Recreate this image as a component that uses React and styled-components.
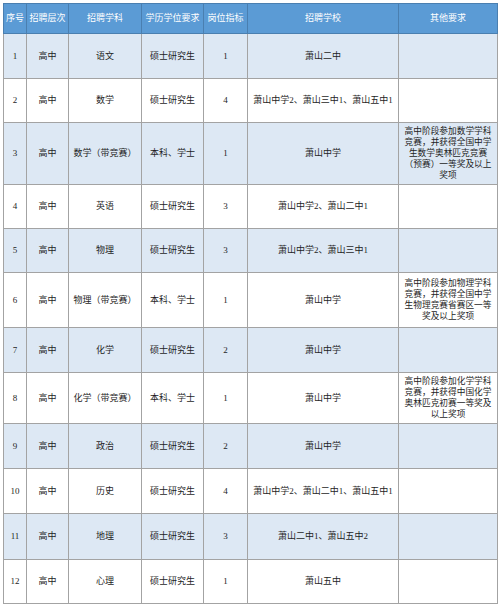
import React from "react";
import styled, { createGlobalStyle } from "styled-components";

const GlobalStyle = createGlobalStyle`
  html, body {
    margin: 0;
    padding: 0;
    background: #ffffff;
  }
  body {
    font-family: "Liberation Serif", "Noto Sans CJK SC", serif;
  }
`;

const columns = [
  { title: "序号", width: 23 },
  { title: "招聘层次", width: 42 },
  { title: "招聘学科", width: 73 },
  { title: "学历学位要求", width: 62 },
  { title: "岗位指标", width: 44 },
  { title: "招聘学校", width: 151 },
  { title: "其他要求", width: 99 },
];

const rows = [
  { h: 45, subject: "语文", degree: "硕士研究生", count: 1, school: "萧山二中", other: "" },
  { h: 44, subject: "数学", degree: "硕士研究生", count: 4, school: "萧山中学2、萧山三中1、萧山五中1", other: "" },
  {
    h: 62,
    subject: "数学（带竞赛）",
    degree: "本科、学士",
    count: 1,
    school: "萧山中学",
    other: "高中阶段参加数学学科竞赛，并获得全国中学生数学奥林匹克竞赛（预赛）一等奖及以上奖项",
  },
  { h: 44, subject: "英语", degree: "硕士研究生", count: 3, school: "萧山中学2、萧山二中1", other: "" },
  { h: 44, subject: "物理", degree: "硕士研究生", count: 3, school: "萧山中学2、萧山三中1", other: "" },
  {
    h: 55,
    subject: "物理（带竞赛）",
    degree: "本科、学士",
    count: 1,
    school: "萧山中学",
    other: "高中阶段参加物理学科竞赛，并获得全国中学生物理竞赛省赛区一等奖及以上奖项",
  },
  { h: 45, subject: "化学", degree: "硕士研究生", count: 2, school: "萧山中学", other: "" },
  {
    h: 51,
    subject: "化学（带竞赛）",
    degree: "本科、学士",
    count: 1,
    school: "萧山中学",
    other: "高中阶段参加化学学科竞赛，并获得中国化学奥林匹克初赛一等奖及以上奖项",
  },
  { h: 45, subject: "政治", degree: "硕士研究生", count: 2, school: "萧山中学", other: "" },
  { h: 45, subject: "历史", degree: "硕士研究生", count: 4, school: "萧山中学2、萧山二中1、萧山五中1", other: "" },
  { h: 46, subject: "地理", degree: "硕士研究生", count: 3, school: "萧山二中1、萧山五中2", other: "" },
  { h: 44, subject: "心理", degree: "硕士研究生", count: 1, school: "萧山五中", other: "" },
];

const Page = styled.div`
  padding: 3px;
`;

const Table = styled.table`
  width: 494px;
  table-layout: fixed;
  border-collapse: collapse;
  font-size: 9px;
  line-height: 11px;
  color: #1e1e1e;
`;

const HeadRow = styled.tr`
  height: 30px;
  background: #5b9bd5;
`;

const HeadCell = styled.th`
  border: 1px solid #4a7fb0;
  color: #ffffff;
  font-weight: normal;
  text-align: center;
  vertical-align: middle;
  padding: 0;
  white-space: nowrap;
`;

const Row = styled.tr`
  height: ${(p) => p.$h}px;
  background: ${(p) => (p.$shaded ? "#dde8f4" : "#ffffff")};
`;

const Cell = styled.td`
  border: 1px solid #a3a3a3;
  text-align: center;
  vertical-align: middle;
  padding: 0 ${(p) => (p.$wrap ? "5px" : "0")};
  font-size: ${(p) => (p.$wrap ? "8.7px" : "9px")};
  white-space: ${(p) => (p.$wrap ? "normal" : "nowrap")};
`;

export default function App() {
  return (
    <Page>
      <GlobalStyle />
      <Table>
        <colgroup>
          {columns.map((c) => (
            <col key={c.title} style={{ width: c.width }} />
          ))}
        </colgroup>
        <thead>
          <HeadRow>
            {columns.map((c) => (
              <HeadCell key={c.title}>{c.title}</HeadCell>
            ))}
          </HeadRow>
        </thead>
        <tbody>
          {rows.map((r, i) => (
            <Row key={i} $h={r.h} $shaded={i % 2 === 0}>
              <Cell>{i + 1}</Cell>
              <Cell>高中</Cell>
              <Cell>{r.subject}</Cell>
              <Cell>{r.degree}</Cell>
              <Cell>{r.count}</Cell>
              <Cell>{r.school}</Cell>
              <Cell $wrap>{r.other}</Cell>
            </Row>
          ))}
        </tbody>
      </Table>
    </Page>
  );
}
